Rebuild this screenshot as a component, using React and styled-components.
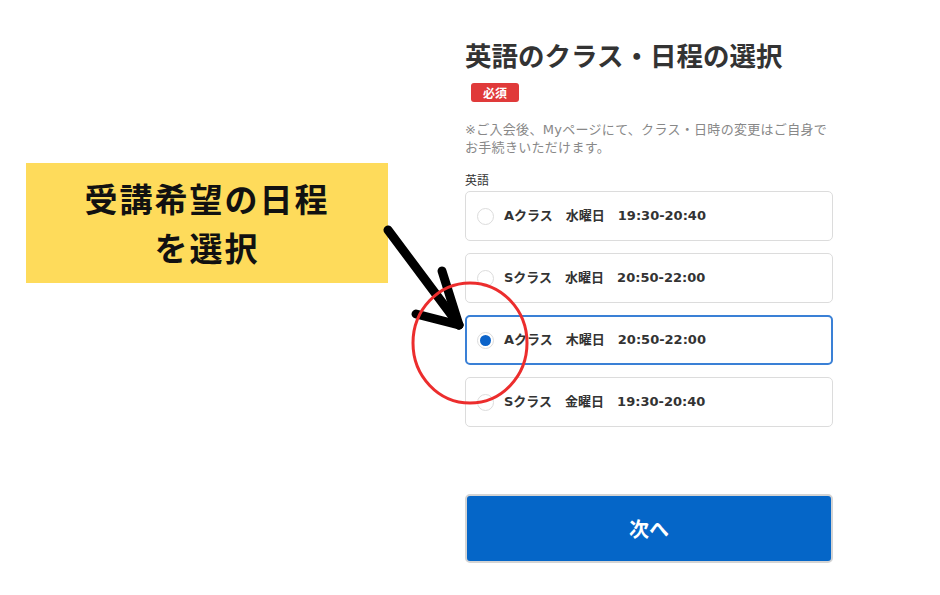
import React from "react";
import styled, { createGlobalStyle, css } from "styled-components";

const Global = createGlobalStyle`
  html, body { margin: 0; padding: 0; background: #fff; }
  body { font-family: "Noto Sans CJK JP", "Noto Sans", sans-serif; color: #333; }
`;

const Page = styled.div`
  position: relative;
  width: 940px;
  height: 595px;
  display: flex;
  align-items: flex-start;
  padding-left: 26px;
  gap: 77px;
  box-sizing: border-box;
  overflow: hidden;
`;

const Callout = styled.div`
  margin-top: 163px;
  width: 362px;
  height: 120px;
  background: #fedb5b;
  display: flex;
  flex-direction: column;
  align-items: center;
  justify-content: center;
  font-size: 33px;
  font-weight: 700;
  line-height: 49px;
  letter-spacing: 2px;
  color: #111;
  text-align: center;
`;

const Form = styled.div`
  width: 368px;
  padding-top: 37px;
  display: flex;
  flex-direction: column;
  align-items: stretch;
`;

const Title = styled.h1`
  margin: 0;
  font-size: 26.5px;
  line-height: 36px;
  font-weight: 700;
  color: #333;
  white-space: nowrap;
`;

const Badge = styled.span`
  align-self: flex-start;
  margin: 10px 0 0 6px;
  width: 48px;
  height: 19px;
  border-radius: 3px;
  background: #e03a3a;
  color: #fff;
  font-size: 12px;
  font-weight: 700;
  display: flex;
  align-items: center;
  justify-content: center;
`;

const Note = styled.p`
  margin: 19px 0 0;
  font-family: "DejaVu Sans", "Noto Sans CJK JP", sans-serif;
  font-size: 13px;
  line-height: 18px;
  letter-spacing: 0.3px;
  color: #888;
  white-space: nowrap;
`;

const Label = styled.div`
  margin-top: 14px;
  font-size: 12px;
  line-height: 18px;
  color: #333;
`;

const Options = styled.div`
  margin-top: 2px;
  display: flex;
  flex-direction: column;
  gap: 12px;
`;

const Option = styled.label`
  height: 50px;
  box-sizing: border-box;
  border: 1px solid #dcdcdc;
  border-radius: 5px;
  display: flex;
  align-items: center;
  gap: 10px;
  padding-left: 11px;
  ${(p) =>
    p.$selected &&
    css`
      border: 2px solid #3a80d6;
      padding-left: 10px;
    `}
`;

const Radio = styled.span`
  width: 17px;
  height: 17px;
  box-sizing: border-box;
  border-radius: 50%;
  border: 1.5px solid #dcdcdc;
  background: #fff;
  display: flex;
  align-items: center;
  justify-content: center;
  flex-shrink: 0;
  &::after {
    content: "";
    width: 11px;
    height: 11px;
    border-radius: 50%;
    background: ${(p) => (p.$checked ? "#0b63c9" : "transparent")};
  }
`;

const OptionText = styled.span`
  font-family: "DejaVu Sans", "Noto Sans CJK JP", sans-serif;
  font-size: 13px;
  font-weight: 700;
  color: #333;
  white-space: pre;
  margin-bottom: 4px;
`;

const NextButton = styled.button`
  margin-top: 67px;
  height: 69px;
  box-sizing: border-box;
  border: 2px solid #d4d4d4;
  border-radius: 5px;
  background: #0566c8;
  color: #fff;
  font-family: inherit;
  font-size: 20px;
  font-weight: 700;
  cursor: pointer;
`;

const Overlay = styled.svg`
  position: absolute;
  left: 0;
  top: 0;
  pointer-events: none;
`;

const options = [
  { text: "Aクラス　水曜日　19:30-20:40" },
  { text: "Sクラス　水曜日　20:50-22:00" },
  { text: "Aクラス　木曜日　20:50-22:00", selected: true },
  { text: "Sクラス　金曜日　19:30-20:40" },
];

export default function App() {
  return (
    <>
      <Global />
      <Page>
        <Callout>
          <span>受講希望の日程</span>
          <span>を選択</span>
        </Callout>
        <Form>
          <Title>英語のクラス・日程の選択</Title>
          <Badge>必須</Badge>
          <Note>
            ※ご入会後、Myページにて、クラス・日時の変更はご自身で
            <br />
            お手続きいただけます。
          </Note>
          <Label>英語</Label>
          <Options>
            {options.map((o) => (
              <Option key={o.text} $selected={o.selected}>
                <Radio $checked={o.selected} />
                <OptionText>{o.text}</OptionText>
              </Option>
            ))}
          </Options>
          <NextButton>次へ</NextButton>
        </Form>
        <Overlay width="940" height="595" viewBox="0 0 940 595">
          <g stroke="#000" strokeWidth="9" strokeLinecap="round" fill="none">
            <line x1="388" y1="230" x2="459" y2="325" />
            <line x1="442" y1="271" x2="459" y2="325" />
            <line x1="416" y1="314" x2="459" y2="325" />
          </g>
          <ellipse cx="470" cy="343" rx="57" ry="60" fill="none" stroke="#ec2d2d" strokeWidth="3" />
        </Overlay>
      </Page>
    </>
  );
}
